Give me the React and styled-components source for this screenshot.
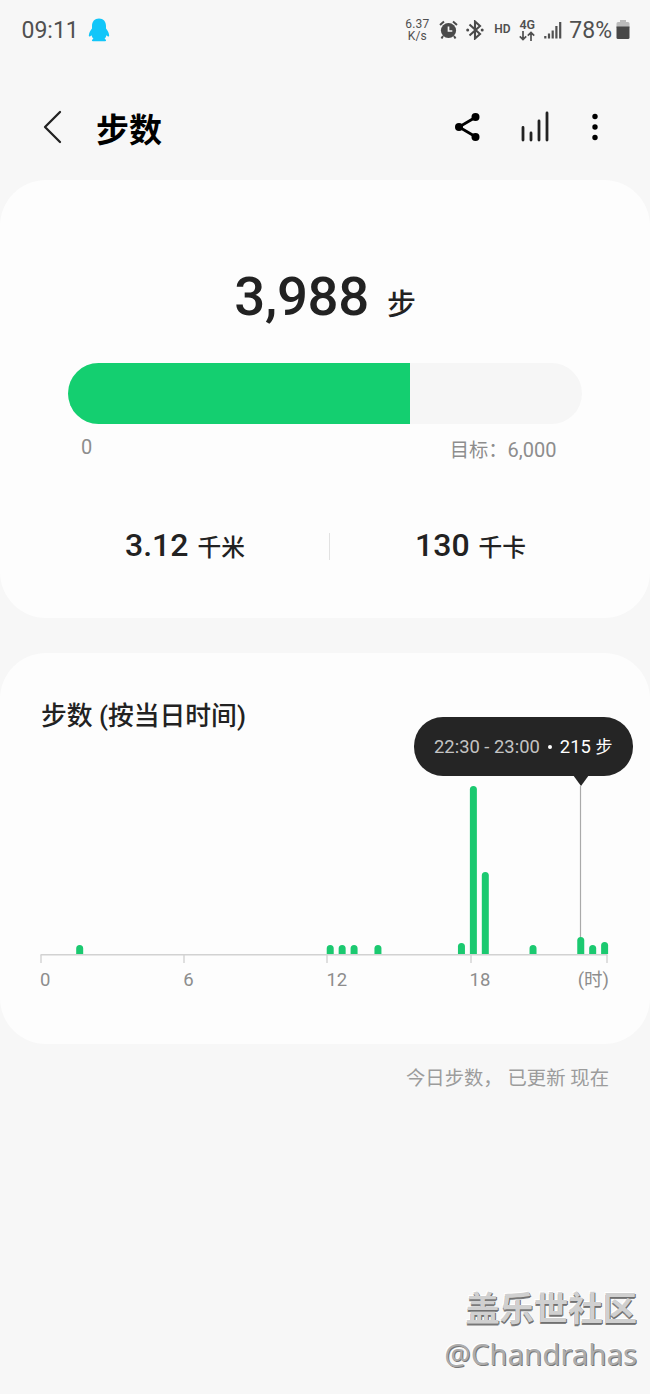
import React from 'react';
import styled, { createGlobalStyle } from 'styled-components';

const GlobalStyle = createGlobalStyle`
  body {
    margin: 0;
    background: #f7f7f7;
    font-family: Roboto, "Noto Sans CJK SC", sans-serif;
  }
`;

const Screen = styled.main`
  width: 650px;
  height: 1394px;
  box-sizing: border-box;
  overflow: hidden;
  display: flex;
  flex-direction: column;
  background: #f7f7f7;
  color: #222;
`;

const StatusBar = styled.div`
  display: flex;
  align-items: center;
  height: 60px;
  padding: 0 20px 0 21.5px;
  box-sizing: border-box;
  color: #505050;
`;

const StatusText = styled.span`
  font-size: 23px;
  line-height: 28px;
  white-space: nowrap;
  padding-top: 1px;
  margin-right: ${(p) => p.$gap || 0}px;
`;

const StatusIcons = styled.div`
  display: flex;
  align-items: center;
  margin-left: auto;
`;

const TinyStack = styled.div`
  display: flex;
  flex-direction: column;
  align-items: center;
  width: 26px;
  font-size: 12px;
  line-height: 12px;
  letter-spacing: 0.2px;
  margin-right: ${(p) => p.$gap || 0}px;
`;

const HdLabel = styled.span`
  font-size: 12px;
  font-weight: 600;
  line-height: 12px;
  width: 17px;
  margin-top: -2px;
  margin-right: 8px;
`;

const NetworkStack = styled.div`
  display: flex;
  flex-direction: column;
  align-items: center;
  width: 16px;
  margin-right: 9px;
  font-size: 12.5px;
  font-weight: 600;
  line-height: 12px;
`;

const Icon = styled.svg`
  display: block;
  flex: none;
  margin-right: ${(p) => p.$gap || 0}px;
`;

const Header = styled.header`
  display: flex;
  align-items: center;
  height: 120px;
  padding: 13px 52px 0 42px;
  box-sizing: border-box;
`;

const Title = styled.h1`
  margin: 8px auto 0 33px;
  font-size: 33px;
  font-weight: 700;
  line-height: 44px;
  color: #000;
`;

const Actions = styled.div`
  display: flex;
  align-items: center;
`;

const Card = styled.section`
  display: flex;
  flex-direction: column;
  box-sizing: border-box;
  flex: none;
  height: ${(p) => p.$height}px;
  margin-bottom: ${(p) => p.$gap}px;
  border-radius: 46px;
  background: #fdfdfd;
`;

const StepTotal = styled.div`
  display: flex;
  align-items: baseline;
  justify-content: center;
  height: 64px;
  line-height: 64px;
  margin-top: 84px;
  margin-bottom: 1px;
  font-size: 54.5px;
  font-weight: 500;
  letter-spacing: -0.3px;
`;

const Unit = styled.span`
  font-size: ${(p) => p.$size}px;
  margin-left: ${(p) => p.$gap}px;
`;

const ProgressTrack = styled.div`
  width: 514px;
  height: 61px;
  margin: 34px 0 0 68px;
  border-radius: 31px;
  background: #f6f6f6;
  overflow: hidden;
`;

const ProgressFill = styled.div`
  height: 100%;
  background: #14cf70;
`;

const ProgressLabels = styled.div`
  display: flex;
  justify-content: space-between;
  padding: 9px 93.5px 0 81px;
  font-size: 20px;
  line-height: 28px;
  color: #8d8d8d;
`;

const GoalLabel = styled.span`
  padding-top: 3px;
`;

const GoalWord = styled.span`
  font-size: 19.3px;
`;

const Stats = styled.div`
  display: flex;
  align-items: center;
  margin-top: 60px;
`;

const Stat = styled.div`
  display: flex;
  align-items: baseline;
  box-sizing: border-box;
  width: ${(p) => p.$width}px;
  padding-left: ${(p) => p.$indent}px;
  font-size: 32px;
  font-weight: 500;
  line-height: 40px;
`;

const Divider = styled.div`
  width: 1px;
  height: 27px;
  background: #e2e2e2;
`;

const ChartTitle = styled.h2`
  margin: 44px 0 0 41px;
  font-size: 25.8px;
  font-weight: 500;
  line-height: 38px;
`;

const ChartArea = styled.div`
  position: relative;
  width: 574px;
  margin: 51px 0 0 40px;
`;

const Tooltip = styled.div`
  position: absolute;
  left: 374px;
  top: -69px;
  display: flex;
  align-items: center;
  box-sizing: border-box;
  width: 219px;
  height: 58.5px;
  padding: 2px 0 0 20px;
  border-radius: 29px;
  background: #252525;
  color: #fff;
  font-size: 18.4px;
  line-height: 26px;
  white-space: nowrap;

  &::after {
    content: "";
    position: absolute;
    left: 159px;
    top: 57.5px;
    border: solid transparent;
    border-width: 11px 8px 0;
    border-top-color: #252525;
  }
`;

const TooltipTime = styled.span`
  color: #c3c3c3;
`;

const TooltipDot = styled.span`
  width: 4px;
  height: 4px;
  margin: 0 8px;
  border-radius: 50%;
  background: #fff;
`;

const TooltipUnit = styled.span`
  font-size: 17px;
`;

const AxisLabels = styled.div`
  display: flex;
  width: 569px;
  padding-top: 3px;
  font-size: 18.5px;
  line-height: 26px;
  color: #8d8d8d;
`;

const AxisLabel = styled.span`
  width: ${(p) => (p.$last ? 'auto' : '143.2px')};
  flex: ${(p) => (p.$grow ? '1' : 'none')};
`;

const Updated = styled.p`
  margin: 1px 41px 0 0;
  text-align: right;
  font-size: 19.35px;
  line-height: 28px;
  color: #9c9c9c;
  white-space: pre;
`;

const Watermark = styled.footer`
  display: flex;
  flex-direction: column;
  align-items: flex-end;
  margin-top: auto;
  padding: 0 13px 18px 0;
  color: #d0d0d0;
`;

const WatermarkName = styled.span`
  font-size: 34.3px;
  font-weight: 700;
  line-height: 46px;
  text-shadow: 1px 1px 0 #707070, 0 2px 0 #808080, -1px -1px 0 #fff;
`;

const WatermarkUser = styled.span`
  font-family: "Noto Sans", sans-serif;
  font-size: 29.4px;
  line-height: 44px;
  color: #acacac;
  text-shadow: 1px 1px 0 #777, -1px -1px 0 #fff;
`;

const SLOT = 11.93;
const BASE = 168;
const bars = [
  [3, 9], [24, 9], [25, 9], [26, 9], [28, 9], [35, 11],
  [36, 168], [37, 82], [41, 9], [45, 17], [46, 9], [47, 12],
];
const ticks = [1, 144, 287, 431, 567];

function barPath([slot, h]) {
  const x = slot * SLOT + 0.4;
  return `M${x} ${BASE}v${-(h - 3.5)}a3.5 3.5 0 0 1 7 0v${h - 3.5}z`;
}

function Chart() {
  return (
    <Icon width="574" height="178" viewBox="0 0 574 178">
      <path d="M540.5 0V155" stroke="#aaa" strokeWidth="1.2" />
      <path d="M0.5 168.7H567.5" stroke="#d2d2d2" strokeWidth="1.5" />
      {ticks.map((x) => (
        <path key={x} d={`M${x} 169v8`} stroke="#d2d2d2" strokeWidth="1.4" />
      ))}
      {bars.map((bar) => (
        <path key={bar[0]} d={barPath(bar)} fill="#1bc970" />
      ))}
    </Icon>
  );
}

function Status() {
  return (
    <StatusBar>
      <StatusText $gap={9}>09:11</StatusText>
      <Icon width="22" height="24" viewBox="0 0 22 24">
        <path
          d="M11 .5C6.600.5 4 3.500 4 8v2.500C2.200 12.500.800 15.500.8 17.800c.2 1.200 1.500.6 2.700-.6.4 1.400 1 2.500 1.900 3.500-1.800.6-2 2.500-.4 2.500h12c1.600 0 1.400-1.900-.4-2.500.9-1 1.500-2.100 1.900-3.500 1.200 1.200 2.500 1.800 2.700.6 0-2.300-1.400-5.300-3.200-7.300V8c0-4.500-2.600-7.500-7-7.500z"
          fill="#12c6f9"
        />
      </Icon>
      <StatusIcons>
        <TinyStack $gap={9}>
          <span>6.37</span>
          <span>K/s</span>
        </TinyStack>
        <Icon $gap={8} width="19" height="20" viewBox="0 0 19 20">
          <circle cx="9.500" cy="10.500" r="7.600" fill="#4a4a4a" />
          <path d="M1 5L5 1.500M18 5L14 1.500M4 16L2.500 18.500M15 16L16.500 18.500" stroke="#4a4a4a" strokeWidth="2" />
          <path d="M9.500 6.500V11h3.800" fill="none" stroke="#f7f7f7" strokeWidth="1.700" />
        </Icon>
        <Icon $gap={10} width="18" height="20" viewBox="0 0 18 20">
          <path d="M3.500 4.500L14 14 9 18.500v-17L14 6 3.500 15.500" fill="none" stroke="#4a4a4a" strokeWidth="2.100" />
          <circle cx="1.700" cy="10" r="1.500" fill="#4a4a4a" />
          <circle cx="16.200" cy="10" r="1.500" fill="#4a4a4a" />
        </Icon>
        <HdLabel>HD</HdLabel>
        <NetworkStack>
          <span>4G</span>
          <svg width="16" height="10" viewBox="0 0 16 10">
            <path
              d="M4 0v8.500M.8 5.300L4 8.500l3.200-3.200M12 10V1.500M8.800 4.700L12 1.500l3.200 3.200"
              fill="none"
              stroke="#505050"
              strokeWidth="1.700"
            />
          </svg>
        </NetworkStack>
        <Icon $gap={7} width="18" height="18" viewBox="0 0 18 18">
          <path d="M1.300 17.500v-2.500M5 17.500v-5M8.700 17.500v-8M12.400 17.500V5M16.200 17.500V1" stroke="#505050" strokeWidth="2.200" />
        </Icon>
        <StatusText $gap={4}>78%</StatusText>
        <Icon width="14" height="20" viewBox="0 0 14 20">
          <path d="M4 0h6v2h2q1.500 0 1.500 1.500V8H.5V3.500Q.5 2 2 2h2z" fill="#bcbcbc" />
          <path d="M.5 6.500h13v11q0 1.500-1.500 1.500H2q-1.500 0-1.500-1.500z" fill="#484848" />
        </Icon>
      </StatusIcons>
    </StatusBar>
  );
}

export default function App() {
  return (
    <>
      <GlobalStyle />
      <Screen>
        <Status />
        <Header>
          <Icon width="21" height="34" viewBox="0 0 21 34">
            <path
              d="M18 2L3 17L18 32"
              fill="none"
              stroke="#222"
              strokeWidth="2.300"
              strokeLinecap="round"
              strokeLinejoin="round"
            />
          </Icon>
          <Title>步数</Title>
          <Actions>
            <Icon $gap={38} width="28" height="30" viewBox="0 0 28 30">
              <path d="M22 5L5 15l17 10" fill="none" stroke="#000" strokeWidth="2.800" />
              <circle cx="21.500" cy="5" r="4" />
              <circle cx="5" cy="15" r="4" />
              <circle cx="21.500" cy="25" r="4" />
            </Icon>
            <Icon $gap={42} width="30" height="32" viewBox="0 0 30 32">
              <path d="M3 29V16.500M11 29v-7M19 29V10M27 29V2" stroke="#222" strokeWidth="2.800" strokeLinecap="round" />
            </Icon>
            <Icon width="6" height="28" viewBox="0 0 6 28">
              <circle cx="3" cy="3.500" r="2.700" />
              <circle cx="3" cy="14" r="2.700" />
              <circle cx="3" cy="24.500" r="2.700" />
            </Icon>
          </Actions>
        </Header>

        <Card $height={438} $gap={35}>
          <StepTotal>
            3,988
            <Unit $size={29} $gap={18}>步</Unit>
          </StepTotal>
          <ProgressTrack>
            <ProgressFill style={{ width: `${(3988 / 6000) * 100}%` }} />
          </ProgressTrack>
          <ProgressLabels>
            <span>0</span>
            <GoalLabel><GoalWord>目标：</GoalWord>6,000</GoalLabel>
          </ProgressLabels>
          <Stats>
            <Stat $width={329} $indent={125}>
              3.12<Unit $size={23.7} $gap={9}>千米</Unit>
            </Stat>
            <Divider />
            <Stat $width={320} $indent={85}>
              130<Unit $size={23.7} $gap={9}>千卡</Unit>
            </Stat>
          </Stats>
        </Card>

        <Card $height={391} $gap={20}>
          <ChartTitle>步数 (按当日时间)</ChartTitle>
          <ChartArea>
            <Chart />
            <AxisLabels>
              <AxisLabel>0</AxisLabel>
              <AxisLabel>6</AxisLabel>
              <AxisLabel>12</AxisLabel>
              <AxisLabel $grow>18</AxisLabel>
              <AxisLabel $last>(时)</AxisLabel>
            </AxisLabels>
            <Tooltip>
              <TooltipTime>22:30 - 23:00</TooltipTime>
              <TooltipDot />
              <span>215 <TooltipUnit>步</TooltipUnit></span>
            </Tooltip>
          </ChartArea>
        </Card>

        <Updated>今日步数， 已更新 现在</Updated>

        <Watermark>
          <WatermarkName>盖乐世社区</WatermarkName>
          <WatermarkUser>@Chandrahas</WatermarkUser>
        </Watermark>
      </Screen>
    </>
  );
}
